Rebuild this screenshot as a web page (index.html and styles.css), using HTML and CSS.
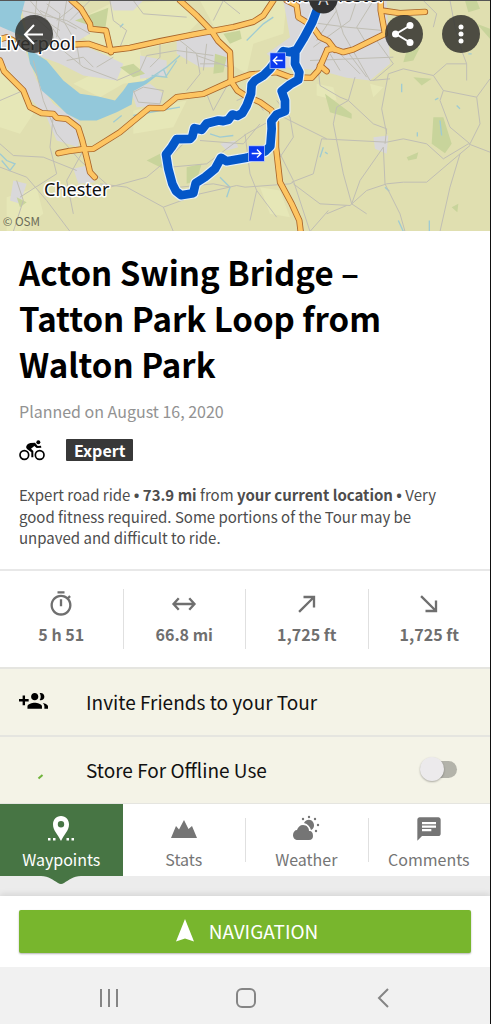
FILE: index.html
```html
<!DOCTYPE html>
<html lang="en">
<head>
  <meta charset="UTF-8">
  <meta name="viewport" content="width=device-width, initial-scale=1">
  <title>Acton Swing Bridge – Tatton Park Loop from Walton Park</title>
  <link rel="stylesheet" href="styles.css">
</head>
<body>

  <header class="map">
    <svg class="map-canvas" viewBox="0 0 1470 693" preserveAspectRatio="xMidYMid slice" role="img" aria-label="Route map">
      <defs>
        <g id="motorways">
          <path d="M215 0 L243 25 L270 70 L272 85 L318 90 L333 155"/>
          <path d="M225 132 L265 130 L325 150 L390 142 L480 122 L580 102 L635 92 L700 80 L760 64 L790 45 L820 0"/>
          <path d="M540 0 L590 45 L635 92 L655 122 L690 155 L692 200 L692 240 L712 270 L735 285 L780 305 L815 330 L828 365 L828 440 L840 545 L875 610 L898 660 L902 693"/>
          <path d="M-5 118 L20 110 L40 120"/>
          <path d="M0 180 L12 212 L70 270 L90 320 L125 338 L160 340 L170 352 L200 355 L235 382 L247 420 L262 480 L270 515 L284 530"/>
          <path d="M175 458 L205 452 L250 446 L280 445 L360 395 L448 322 L490 323 L530 290 L610 280 L692 243 L750 222 L830 215 L870 230 L935 232 L955 210 L982 148"/>
          <path d="M860 0 L890 15 L895 50 L935 75 L960 110 L985 122 L1005 148"/>
          <path d="M982 148 L1000 145 L1030 155 L1060 147 L1155 100 L1142 30 L1142 0"/>
          <path d="M1145 30 L1200 38 L1275 34"/>
          <path d="M960 195 L980 212"/>
        </g>
        <path id="route" d="M962 -5 L950 30 L937 65 L910 115 L890 148 L870 155 L850 152 L825 185 L810 205 L790 225 L765 240 L755 252 L753 280 L740 315 L727 338 L712 346 L697 342 L685 358 L670 362 L655 360 L620 369 L605 388 L583 383 L577 408 L570 415 L530 416 L515 440 L498 462 L505 505 L517 550 L528 572 L543 584 L580 578 L587 548 L615 530 L645 505 L663 472 L680 482 L740 472 L795 453 L811 437 L815 385 L814 362 L830 342 L855 332 L855 300 L845 272 L870 252 L895 238 L898 215 L885 190 L886 150"/>
      </defs>

      <rect class="land" width="1470" height="693"/>
      <path class="field" d="M0 180 L60 240 L100 340 L60 400 L0 380Z M230 60 L330 10 L560 0 L600 60 L540 120 L420 150 L440 240 L370 250 L300 290 L220 250 L340 190 L250 110Z M600 0 L860 0 L850 100 L760 130 L740 220 L690 190 L660 110Z M400 330 L560 300 L520 380 L400 400Z M20 590 L110 560 L130 640 L60 693 L20 693Z M950 250 L1000 260 L1010 300 L950 285Z M780 560 L840 570 L870 650 L810 640Z M1110 250 L1150 260 L1120 290Z"/>
      <path class="urban" d="M60 0 L220 0 L260 70 L270 100 L225 125 L320 165 L370 190 L350 240 L250 225 L180 190 L100 160 L80 90Z M330 0 L430 0 L400 30 L340 30Z M0 75 L45 85 L80 160 L110 240 L160 310 L240 365 L235 440 L170 420 L140 350 L70 270 L20 200 L0 180Z M390 265 L450 250 L490 280 L480 315 L410 320Z M530 115 L640 100 L690 150 L680 200 L600 200 L530 160Z M420 165 L500 180 L500 225 L420 235Z M850 0 L1160 0 L1170 190 L1110 240 L1040 232 L960 210 L850 200 L800 160 L870 110Z M220 505 L260 495 L285 545 L235 550Z M40 540 L80 550 L60 610 L30 600Z M1120 410 L1165 405 L1160 460 L1125 445Z M660 430 L705 420 L715 440 L680 450Z"/>
      <path class="wood" d="M225 60 L325 22 L315 90 L270 75Z M360 200 L400 190 L435 220 L400 230Z M440 480 L480 460 L500 510Z M560 500 L605 490 L590 540 L560 550Z M645 160 L680 170 L670 215 L640 220Z M670 100 L720 90 L725 115 L690 130Z M50 590 L80 605 L60 620Z M975 280 L1055 340 L1055 355 L990 335Z M1300 350 L1330 350 L1355 430 L1335 458 L1295 430Z M1220 150 L1260 140 L1240 180 L1210 185Z M1240 230 L1295 235 L1265 255Z M1220 470 L1255 455 L1250 475 L1225 480Z M1395 0 L1430 0 L1440 25 L1405 35Z M1355 620 L1375 610 L1372 635Z M1430 70 L1470 85 L1470 115Z"/>
      <path class="water" d="M0 0 L75 0 L62 50 L92 150 L140 180 L190 240 L240 280 L295 288 L345 300 L370 270 L385 248 L430 242 L480 218 L440 250 L400 272 L395 312 L350 335 L290 360 L240 360 L200 340 L160 300 L125 270 L110 225 L90 190 L75 110 L0 78Z"/>
      <path class="stream" d="M440 240 L500 200 L540 165 M455 225 L500 230 L490 205 M500 225 L530 180 M0 460 L20 480 L45 490 L30 510 L5 480 M400 345 L480 330 L540 320 M340 365 L365 345 M740 120 L790 70 L820 50 M630 400 L660 410 L700 405 M660 530 L690 560 L680 590 M1320 360 L1325 405 M1205 250 L1205 275 M1195 660 L1210 693 M1288 660 L1288 693 M1155 560 L1168 572 M970 440 L960 470 M975 455 L983 460 M1370 315 L1380 325 M1305 298 L1315 293 M1252 395 L1252 408 M1405 160 L1415 160 M360 80 L370 70"/>

      <g class="lanes">
        <path d="M90 0 L150 70 L165 130 L250 200 L350 238 M110 0 L105 50 L150 90 M65 30 L200 60 L270 100 M150 0 L135 50 L190 130 M200 0 L190 60 L230 130 L240 190 M270 0 L210 60 M350 240 L420 210 L440 165 L530 150 L640 165 M340 170 L290 200 M400 0 L430 40 L560 50"/>
        <path d="M100 80 L125 110 L120 170 M140 10 L180 40 L170 110 M60 60 L120 50 L180 90 M120 30 L230 85 M220 20 L170 60"/>
        <path d="M100 180 L130 300 L170 400 L240 480 L330 560 L440 530 L500 480 L570 410 M160 345 L150 440 L170 520 L60 590 M0 300 L70 270 M0 430 L40 465 L130 470 L230 510 M0 500 L80 530 L140 600 L210 693 M50 540 L70 600 L40 693 M250 450 L200 540 L220 640 M400 270 L415 305 L480 310 L490 270 L430 260 L400 275 M540 120 L590 160 L600 220 L560 270 M590 165 L690 200 M640 60 L670 0 L720 40 M690 240 L640 330 L620 280"/>
        <path d="M300 550 L380 560 L490 620 L520 693 M490 620 L600 580 L710 555 L735 560 L870 550 L880 545 M510 500 L620 490 L740 400 L830 350 M540 560 L640 550 L690 560 M600 420 L730 430 L780 370 M735 400 L750 520 L770 570 L830 650 M770 570 L750 660 M830 440 L880 540 L930 693 M875 545 L940 520 L965 415 L1160 425 L1210 415 L1280 430 L1330 475 L1405 430 L1470 455"/>
        <path d="M830 340 L980 415 M1000 370 L1030 520 L1055 610 L1100 640 M1055 610 L1080 540 L1150 440 L1155 550 L1200 640 L1215 693 M1050 615 L960 610 L880 550 M1050 615 L1100 570 L1160 550 L1210 545 L1280 545 L1380 460 L1410 435 M1380 460 L1350 560 L1320 693 M980 640 L1040 615 M930 693 L985 630"/>
        <path d="M955 210 L960 255 L1020 290 L1045 300 L1120 370 L1160 385 L1155 430 M1045 300 L1065 230 M1000 370 L1010 320 L1045 300 M1145 325 L1165 220 L1210 205 L1300 225 L1330 270 L1430 290 L1470 235 M1430 290 L1440 370 L1410 430 L1350 380 L1320 300 L1330 270 M1145 325 L1160 400 M1300 225 L1340 190 L1400 190 L1385 150 L1365 80 L1350 0 M1400 190 L1400 240 M1270 0 L1310 40 L1300 80"/>
        <path d="M940 80 L1080 220 M1000 0 L1030 100 L1110 240 L1170 235 M1070 0 L1050 60 L940 140 M890 60 L1040 80 L1150 90 M1040 150 L1100 230 M990 160 L1020 210 M1130 120 L1180 190 L1120 240 M930 180 L1180 170 M1010 30 L950 120 M1120 0 L1070 80 L1100 130"/>
        <path d="M200 180 L250 170 L280 200 M330 0 L340 60 L380 90 L360 140 M450 200 L480 170 L480 130 M560 140 L560 190 M620 130 L610 210 M600 190 L660 190 M710 300 L760 280 L790 330 M830 300 L870 350 L880 410 L840 470"/>
      </g>

      <use href="#motorways" class="motorway-edge"/>
      <use href="#motorways" class="motorway"/>
      <use href="#route" class="route-edge"/>
      <use href="#route" class="route"/>

      <g class="marker">
        <rect x="810" y="157" width="47" height="47"/>
        <path d="M848 180 H820 M832 168 L820 180 L832 192"/>
        <rect x="746" y="436" width="47" height="47"/>
        <path d="M755 459 H783 M771 447 L783 459 L771 471"/>
      </g>

      <text class="town" x="857" y="5">Manchester</text>
      <circle class="start" cx="970" cy="-4" r="43"/>
      <text class="start-label" x="970" y="14">A</text>
      <text class="town" x="-9" y="149">Liverpool</text>
      <text class="town" x="132" y="585">Chester</text>
      <text class="copyright" x="8" y="676">© OSM</text>
    </svg>

    <nav class="map-actions">
      <button class="round-button" aria-label="Back">
        <svg viewBox="0 0 38 38"><path class="line" d="M28 19.500H10 M19 10 L10 19.500 L19 29"/></svg>
      </button>
      <button class="round-button push-right" aria-label="Share">
        <svg viewBox="0 0 38 38"><path class="line" d="M25 10.500 L11 19 L25 27.500"/><circle cx="25" cy="10.500" r="3.500"/><circle cx="10.500" cy="19" r="3.500"/><circle cx="25" cy="27.500" r="3.500"/></svg>
      </button>
      <button class="round-button" aria-label="More options">
        <svg viewBox="0 0 38 38"><circle cx="19" cy="12" r="2.500"/><circle cx="19" cy="19" r="2.500"/><circle cx="19" cy="26" r="2.500"/></svg>
      </button>
    </nav>
  </header>

  <main>
    <section class="summary">
      <h1>Acton Swing Bridge – Tatton Park Loop from Walton Park</h1>
      <p class="date">Planned on August 16, 2020</p>
      <div class="sport">
        <svg class="bike" viewBox="0 0 78 63">
          <g class="wheels"><circle cx="16" cy="45" r="13"/><circle cx="62" cy="45" r="13"/></g>
          <circle cx="58" cy="7" r="6"/>
          <path d="M22 18 Q25 10 34 9 L48 8 L56 18 L66 17 L67 23 L53 24 L46 18 L36 26 L43 33 V52 H37 V37 L24 27 Q20 23 22 18Z"/>
        </svg>
        <span class="badge">Expert</span>
      </div>
      <p class="description">Expert road ride <b class="dot">•</b> <b>73.9 mi</b> from <b>your current location</b> <b class="dot">•</b> Very good fitness required. Some portions of the Tour may be unpaved and difficult to ride.</p>
    </section>

    <ul class="stats">
      <li>
        <svg viewBox="0 0 24 24"><path d="M15 1H9v2h6V1zm-4 13h2V8h-2v6zm8.030-6.610l1.420-1.420c-.430-.510-.900-.990-1.410-1.410l-1.420 1.420C16.070 4.740 14.120 4 12 4c-4.970 0-9 4.030-9 9s4.020 9 9 9 9-4.030 9-9c0-2.120-.740-4.070-1.970-5.610zM12 20c-3.870 0-7-3.130-7-7s3.130-7 7-7 7 3.130 7 7-3.130 7-7 7z"/></svg>
        5 h 51
      </li>
      <li>
        <svg viewBox="0 0 24 24"><path class="line" d="M3 12H21 M7.500 7 L3 12 L7.500 17 M16.500 7 L21 12 L16.500 17"/></svg>
        66.8 mi
      </li>
      <li>
        <svg viewBox="0 0 24 24"><path d="M9 5v2h6.590L4.500 18.090 5.910 19.500 17 8.410V15h2V5z"/></svg>
        1,725 ft
      </li>
      <li>
        <svg viewBox="0 0 24 24"><path d="M9 19v-2h6.590L4.500 5.910 5.910 4.500 17 15.590V9h2v10z"/></svg>
        1,725 ft
      </li>
    </ul>

    <button class="row">
      <svg class="row-icon" viewBox="0 0 24 24"><path d="M8 10H5V7H3v3H0v2h3v3h2v-3h3v-2zm10 1c1.660 0 2.990-1.340 2.990-3S19.660 5 18 5c-.320 0-.630.050-.910.140.570.810.900 1.790.900 2.860s-.340 2.040-.900 2.860c.280.090.590.140.910.140zm-5 0c1.660 0 2.990-1.340 2.990-3S14.660 5 13 5c-1.660 0-3 1.340-3 3s1.340 3 3 3zm6.620 2.160c.830.730 1.380 1.660 1.380 2.840v2h3v-2c0-1.540-2.370-2.490-4.380-2.840zM13 13c-2 0-6 1-6 3v2h12v-2c0-2-4-3-6-3z"/></svg>
      Invite Friends to your Tour
    </button>
    <label class="row" for="offline">
      <svg class="row-icon" viewBox="0 0 29 29"><path class="spinner" d="M19.500 23.500 L23.500 20"/></svg>
      Store For Offline Use
      <input type="checkbox" id="offline" class="switch">
    </label>

    <nav class="tabs">
      <a href="#waypoints" class="tab active">
        <svg viewBox="0 0 28 28"><path fill-rule="evenodd" d="M14 1c-5 0-8 4-8 8.500 0 6 5 10 8 16.500 3-6.500 8-10.500 8-16.500C22 5 19 1 14 1zM14 6a3.200 3.200 0 1 1 0 6.400 3.200 3.200 0 0 1 0-6.400z"/><path d="M1 23h2.500v2.500H1zM6 23h2.500v2.500H6zM19.500 23H22v2.500h-2.500zM24.500 23H27v2.500h-2.500z"/></svg>
        Waypoints
        <svg class="pointer" viewBox="0 0 40 8"><path d="M0 0H40C32 0 28 4 23 7Q20 9 17 7C12 4 8 0 0 0Z"/></svg>
      </a>
      <a href="#stats" class="tab">
        <svg viewBox="0 0 28 28"><path d="M1 23L6 11l3 3.500L14 5l4.500 9L22 11l5 12z"/></svg>
        Stats
      </a>
      <a href="#weather" class="tab">
        <svg viewBox="0 0 28 28"><path d="M6 25C3 25 1 23 1 20s2-5 4-5c1-3 3-5 6-5 4 0 6 3 6 6 3 0 4 2 4 5 0 2-1 4-4 4z"/><path d="M12 8c2-4 7-4 9-1s1 7-2 8c-1-3-3-6-7-7z"/><circle cx="11" cy="4" r="1.200"/><circle cx="17" cy="2" r="1.200"/><circle cx="23" cy="4" r="1.200"/><circle cx="26" cy="10" r="1.200"/><circle cx="24" cy="16" r="1.200"/></svg>
        Weather
      </a>
      <a href="#comments" class="tab">
        <svg viewBox="0 0 24 24"><path d="M20 2H4c-1.100 0-2 .900-2 2v18l4-4h14c1.100 0 2-.900 2-2V4c0-1.100-.900-2-2-2zM6 9h12v2H6V9zm8 5H6v-2h8v2zm4-6H6V6h12v2z"/></svg>
        Comments
      </a>
    </nav>
  </main>

  <footer>
    <div class="start-bar">
      <button class="navigate">
        <svg viewBox="0 0 18 23"><path d="M9 0L18 22.500L9 19.500L0 22.500Z"/></svg>
        NAVIGATION
      </button>
    </div>
    <nav class="system-bar">
      <button aria-label="Recent apps"><svg viewBox="0 0 20 20"><path d="M2 1V19M10 1V19M18 1V19"/></svg></button>
      <button aria-label="Home"><svg viewBox="0 0 20 20"><rect x="1" y="1" width="18" height="18" rx="5"/></svg></button>
      <button aria-label="Back"><svg viewBox="0 0 20 20"><path d="M14 1L5 10L14 19"/></svg></button>
    </nav>
  </footer>

</body>
</html>
```
FILE: styles.css
```css
* { box-sizing: border-box; }
body {
  margin: 0;
  min-height: 100vh;
  display: flex;
  flex-direction: column;
  font-family: "Noto Sans CJK SC", "Noto Sans", sans-serif;
  background: #ececec;
  border-right: 1px solid #111;
  color: #4d4d4d;
}
h1, p, ul { margin: 0; padding: 0; }
button {
  font: inherit;
  border: none;
  padding: 0;
  cursor: pointer;
}
svg { fill: currentColor; }
.line {
  fill: none;
  stroke: currentColor;
  stroke-width: 2;
}

/* map */
.map {
  position: relative;
  height: 231px;
  overflow: hidden;
  border-top: 1px solid #555;
}
.map-canvas {
  display: block;
  width: 100%;
  height: 100%;
}
.land { fill: #e0dfb0; }
.field { fill: #e6e7b7; }
.urban { fill: #d9d8da; }
.wood { fill: #c8d49b; }
.water { fill: #93c8da; }
.stream {
  fill: none;
  stroke: #9fcbd2;
  stroke-width: 4;
}
.lanes {
  fill: none;
  stroke: #c0beb4;
  stroke-width: 3;
  stroke-linejoin: round;
}
.motorway, .motorway-edge, .route, .route-edge {
  fill: none;
  stroke-linecap: round;
  stroke-linejoin: round;
}
.motorway-edge { stroke: #a9652a; stroke-width: 19; }
.motorway { stroke: #fdc562; stroke-width: 14; }
.route-edge { stroke: #e4f0fb; stroke-width: 33; }
.route { stroke: #0457c8; stroke-width: 26; }
.marker rect {
  fill: #0b3af0;
  stroke: #c9d9fb;
  stroke-width: 2;
}
.marker path {
  fill: none;
  stroke: #fff;
  stroke-width: 4;
}
.town {
  font: 54px "Noto Sans", sans-serif;
  fill: #111;
  stroke: #fff;
  stroke-width: 9;
  stroke-linejoin: round;
  paint-order: stroke;
}
.start { fill: #333; }
.start-label {
  font: 48px "Noto Sans", sans-serif;
  fill: #ddd;
  text-anchor: middle;
}
.copyright {
  font-size: 35px;
  fill: #6b6b57;
}
.map-actions {
  position: absolute;
  top: 14px;
  left: 15px;
  right: 10px;
  display: flex;
  gap: 19px;
}
.round-button {
  width: 38px;
  height: 38px;
  border-radius: 50%;
  background: rgba(50, 50, 47, 0.85);
  color: #fff;
}
.round-button svg { display: block; }
.push-right { margin-left: auto; }

/* summary */
.summary {
  padding: 18px 19px 21px;
  background: #fff;
}
h1 {
  font-size: 33px;
  line-height: 46px;
  color: #000;
}
.date {
  margin-top: 12px;
  font-size: 16px;
  line-height: 24px;
  color: #929292;
}
.sport {
  display: flex;
  align-items: center;
  gap: 21px;
  margin-top: 16px;
}
.bike {
  width: 26px;
  height: 21px;
  color: #000;
}
.wheels {
  fill: none;
  stroke: currentColor;
  stroke-width: 5;
}
.badge {
  padding: 0 8px;
  background: #383838;
  border-radius: 1px;
  color: #fff;
  font-size: 16px;
  font-weight: bold;
  line-height: 22px;
}
.description {
  margin-top: 23px;
  font-size: 15px;
  line-height: 21px;
}
/* the CJK bullet is a full em wide */
.dot { font-family: "Noto Sans", sans-serif; }

/* stats */
.stats {
  display: grid;
  grid-template-columns: repeat(4, 1fr);
  padding: 18px 0;
  background: #fff;
  border-top: 2px solid #e8e8e8;
  list-style: none;
}
.stats li {
  display: flex;
  flex-direction: column;
  align-items: center;
  gap: 4px;
  height: 60px;
  padding-top: 1px;
  font-size: 16px;
  font-weight: bold;
  line-height: 24px;
  color: #6f6f6f;
}
.stats li + li { border-left: 1px solid #e0e0e0; }
.stats svg {
  width: 28px;
  height: 28px;
}

/* action rows */
.row {
  display: flex;
  align-items: center;
  gap: 38px;
  width: 100%;
  height: 68px;
  padding: 0 33px 2px 19px;
  background: #f4f3e7;
  border-top: 2px solid #e5e5e0;
  color: #111;
  font-size: 19px;
  text-align: left;
  cursor: pointer;
}
.row-icon {
  width: 29px;
  height: 29px;
  color: #000;
}
.spinner {
  stroke: #6fb33a;
  stroke-width: 2;
}
.switch {
  appearance: none;
  position: relative;
  width: 34px;
  height: 17px;
  margin: 0 0 0 auto;
  border-radius: 9px;
  background: #b3b3aa;
  cursor: pointer;
}
.switch::before {
  content: "";
  position: absolute;
  top: -4px;
  left: -3px;
  width: 24px;
  height: 24px;
  border-radius: 50%;
  background: #eceaec;
  box-shadow: 0 1px 2px rgba(0, 0, 0, 0.3);
}
.switch:checked::before { left: 13px; }

/* tabs */
.tabs {
  display: grid;
  grid-template-columns: repeat(4, 1fr);
  height: 73px;
  background: #fff;
  border-top: 1px solid #e5e5e0;
}
.tab {
  position: relative;
  display: flex;
  flex-direction: column;
  align-items: center;
  gap: 4px;
  padding-top: 11px;
  color: #757575;
  font-size: 16px;
  line-height: 24px;
  text-decoration: none;
}
.tab svg {
  width: 28px;
  height: 28px;
}
.tab + .tab::before {
  content: "";
  position: absolute;
  left: 0;
  top: 14px;
  height: 44px;
  border-left: 1px solid #e0e0e0;
}
.tab.active + .tab::before { display: none; }
.tab.active {
  background: #477544;
  color: #fff;
}
.tab .pointer {
  position: absolute;
  top: 100%;
  width: 40px;
  height: 8px;
  color: #477544;
}

/* bottom bars */
footer {
  margin-top: auto;
}
.start-bar {
  padding: 14px 19px;
  background: #fff;
  box-shadow: 0 -2px 6px rgba(0, 0, 0, 0.1);
}
.navigate {
  display: flex;
  align-items: center;
  justify-content: center;
  gap: 15px;
  width: 100%;
  height: 43px;
  padding: 0 0 2px 4px;
  background: #78b62d;
  border-radius: 2px;
  box-shadow: 0 1px 2px rgba(0, 0, 0, 0.3);
  color: #fff;
  font-size: 19px;
}
.navigate svg {
  width: 18px;
  height: 23px;
}
.system-bar {
  display: grid;
  grid-template-columns: repeat(3, 1fr);
  height: 57px;
  padding: 0 37px 0 40px;
  background: #f1f1f1;
}
.system-bar button {
  background: none;
  color: #858585;
}
.system-bar svg {
  width: 20px;
  height: 20px;
  fill: none;
  stroke: currentColor;
  stroke-width: 2;
  vertical-align: middle;
}
```
